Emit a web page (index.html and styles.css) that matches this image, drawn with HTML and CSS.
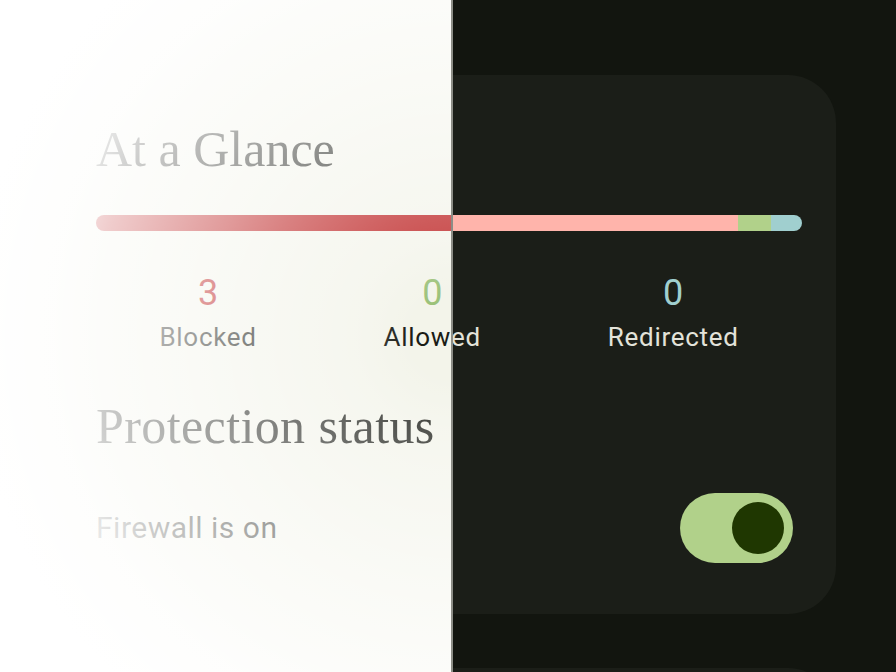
FILE: index.html
```html
<!DOCTYPE html>
<html lang="en">
<head>
<meta charset="utf-8">
<title>At a Glance</title>
<link rel="stylesheet" href="styles.css">
</head>
<body>
<div class="stage">
  <div class="theme dark">
    <section class="card">
      <h2 class="title">At a Glance</h2>
      <div class="bar">
        <span class="seg seg-blocked" style="width:90.9%"></span>
        <span class="seg seg-allowed" style="width:4.7%"></span>
        <span class="seg seg-redirected" style="width:4.4%"></span>
      </div>
      <div class="stats">
        <div class="stat"><span class="num num-blocked">3</span><span class="label">Blocked</span></div>
        <div class="stat"><span class="num num-allowed">0</span><span class="label">Allowed</span></div>
        <div class="stat"><span class="num num-redirected">0</span><span class="label">Redirected</span></div>
      </div>
      <h2 class="title title-second">Protection status</h2>
      <div class="row">
        <span class="row-text">Firewall is on</span>
        <span class="switch"><span class="thumb"></span></span>
      </div>
    </section>
    <section class="card card-next"></section>
  </div>

  <div class="reveal">
    <div class="theme light">
      <section class="card">
        <h2 class="title">At a Glance</h2>
        <div class="bar">
          <span class="seg seg-blocked" style="width:90.9%"></span>
          <span class="seg seg-allowed" style="width:4.7%"></span>
          <span class="seg seg-redirected" style="width:4.4%"></span>
        </div>
        <div class="stats">
          <div class="stat"><span class="num num-blocked">3</span><span class="label">Blocked</span></div>
          <div class="stat"><span class="num num-allowed">0</span><span class="label">Allowed</span></div>
          <div class="stat"><span class="num num-redirected">0</span><span class="label">Redirected</span></div>
        </div>
        <h2 class="title title-second">Protection status</h2>
        <div class="row">
          <span class="row-text">Firewall is on</span>
          <span class="switch"><span class="thumb"></span></span>
        </div>
      </section>
      <section class="card card-next"></section>
    </div>
    <div class="veil"></div>
  </div>
</div>
</body>
</html>
```

FILE: styles.css
```css
html, body {
  margin: 0;
  padding: 0;
}

body {
  width: 896px;
  height: 672px;
  overflow: hidden;
  font-family: Roboto, "Noto Sans", sans-serif;
}

.stage {
  display: grid;
  width: 896px;
  height: 672px;
  overflow: hidden;
}

.theme {
  grid-area: 1 / 1;
  width: 896px;
  height: 672px;
  box-sizing: border-box;
  padding-top: 75px;
  overflow: hidden;
}

.dark {
  background: #12150f;
  --card: #1b1e18;
  --text: #e3e3da;
  --blocked: #ffb4ab;
  --allowed: #b1d18a;
  --redirected: #a0cfcf;
  --track: #b1d18a;
  --thumb: #1f3701;
}

.light {
  background: #f3f4ea;
  --card: #f3f4ea;
  --text: #1a1c16;
  --blocked: #ba1a1a;
  --allowed: #9cc27a;
  --redirected: #3f6a6a;
  --track: #4c662b;
  --thumb: #ffffff;
}

.reveal {
  grid-area: 1 / 1;
  justify-self: start;
  width: 451px;
  height: 672px;
  overflow: hidden;
  border-right: 2px solid #8c8d86;
  display: grid;
}

.reveal .theme {
  grid-area: 1 / 1;
}

.veil {
  grid-area: 1 / 1;
  width: 896px;
  height: 672px;
  background: radial-gradient(circle at 452px 336px,
    rgba(255, 255, 255, 0) 40px,
    rgba(255, 255, 255, 0.25) 100px,
    rgba(255, 255, 255, 0.45) 200px,
    rgba(255, 255, 255, 0.56) 250px,
    rgba(255, 255, 255, 0.78) 360px,
    rgba(255, 255, 255, 0.89) 400px,
    rgba(255, 255, 255, 1) 480px);
}

.card {
  margin: 0 60px;
  height: 539px;
  box-sizing: border-box;
  padding: 45px 34px 0 36px;
  background: var(--card);
  border-radius: 48px;
  color: var(--text);
}

.card-next {
  margin-top: 54px;
  height: 200px;
}

.title {
  margin: 0;
  font-family: "Liberation Serif", "DejaVu Serif", serif;
  font-weight: normal;
  font-size: 50px;
  line-height: 58px;
}

.title-second {
  margin-top: 44px;
  letter-spacing: 0.4px;
}

.bar {
  display: flex;
  height: 16px;
  margin-top: 37px;
  border-radius: 8px;
  overflow: hidden;
}

.seg {
  display: block;
  height: 100%;
}

.seg-blocked { background: var(--blocked); }
.seg-allowed { background: var(--allowed); }
.seg-redirected { background: var(--redirected); }

.stats {
  display: flex;
  justify-content: space-around;
  margin-top: 41.7px;
}

.stat {
  display: flex;
  flex-direction: column;
  align-items: center;
  gap: 8.4px;
}

.num {
  font-size: 36px;
  line-height: 40px;
}

.num-blocked { color: var(--blocked); }
.num-allowed { color: var(--allowed); }
.num-redirected { color: var(--redirected); }

.label {
  font-size: 26px;
  line-height: 32px;
  letter-spacing: 0.7px;
}

.row {
  display: flex;
  align-items: center;
  justify-content: space-between;
  margin-top: 38px;
}

.row-text {
  font-size: 30px;
  line-height: 36px;
  letter-spacing: 0.5px;
}

.switch {
  display: flex;
  align-items: center;
  justify-content: flex-end;
  width: 113px;
  height: 70px;
  box-sizing: border-box;
  padding-right: 9px;
  margin-right: 9px;
  border-radius: 35px;
  background: var(--track);
}

.thumb {
  display: block;
  width: 52px;
  height: 52px;
  border-radius: 50%;
  background: var(--thumb);
}
```
